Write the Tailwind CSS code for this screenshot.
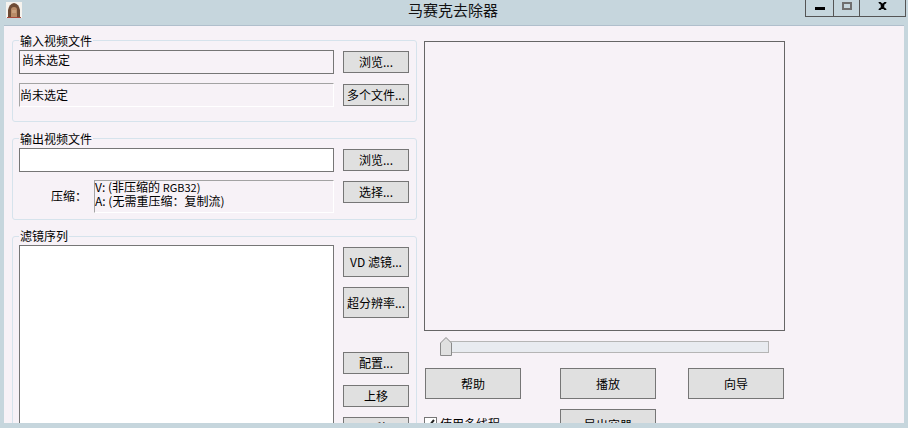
<!doctype html>
<html lang="zh">
<head>
<meta charset="utf-8">
<script src="https://cdn.jsdelivr.net/npm/@tailwindcss/browser@4"></script>
</head>
<body class="m-0 overflow-hidden">
<div class="relative w-[908px] h-[428px] bg-[#c6d6dd] text-[12px] leading-[14px] text-black font-['Noto_Sans_CJK_SC','Liberation_Sans',sans-serif] overflow-hidden">
  <!-- title bar -->
  <header class="relative h-[25px] flex justify-center pr-[2px]">
    <svg class="absolute left-[6px] top-[2px]" width="16" height="16" viewBox="0 0 16 16"><rect width="16" height="16" fill="#f6f3ee"/><path d="M2 15V8q1-6 6-7q5 1 6 7v7z" fill="#6e4c36"/><path d="M5 15V8q0-3 3-3t3 3v7z" fill="#b98c68"/><path d="M6 8h4v3H6z" fill="#c9a17f"/><path d="M1 15h14v1H1z" fill="#a8483a"/></svg>
    <h1 class="m-0 font-normal text-[15px] leading-[20px] text-[#111]">马赛克去除器</h1>
    <div class="absolute left-[805px] top-0 w-[101px] h-[17px] flex border border-t-0 border-[#555]">
      <div class="w-[28px] border-r border-[#555] flex justify-center"><span class="mt-[7px] w-[10px] h-[3px] bg-black"></span></div>
      <div class="w-[26px] border-r border-[#555] flex justify-center"><span class="mt-[2px] w-[10px] h-[8px] border-2 border-[#6f6f6f]"></span></div>
      <div class="flex-1 flex justify-center"><svg class="mt-[2px]" width="9" height="8" viewBox="0 0 9 8"><path d="M1 0l3.500 3L8 0M1 8l3.500-3L8 8M3 3l3 2M6 3L3 5" stroke="#000" stroke-width="2" fill="none"/></svg></div>
    </div>
  </header>
  <!-- client area -->
  <main class="ml-[4px] w-[900px] h-[398px] bg-[#f7f2f7] border-t border-[#b0bfcc] flex overflow-hidden">
    <div class="ml-[8px] w-[405px] shrink-0 pt-[14px] flex flex-col gap-[16px]">
      <section class="relative h-[82px] shrink-0 border border-[#d6e3ec] rounded-[3px] pl-[6px] pt-[9px] flex flex-col gap-[9px]">
        <span class="absolute left-[6px] top-[-7px] px-[1px] bg-[#f7f2f7]">输入视频文件</span>
        <div class="flex gap-[9px]">
          <div class="w-[315px] h-[24px] border border-[#767676] pl-[2px] leading-[17px]">尚未选定</div>
          <button class="mt-[1px] w-[66px] h-[22px] bg-[#e0e0e0] border border-[#767676]">浏览...</button>
        </div>
        <div class="flex gap-[9px]">
          <div class="w-[315px] h-[24px] border border-t-[#a3a3a3] border-l-[#a3a3a3] border-r-white border-b-white leading-[22px]">尚未选定</div>
          <button class="mt-[1px] w-[66px] h-[22px] bg-[#e0e0e0] border border-[#767676] whitespace-nowrap">多个文件...</button>
        </div>
      </section>
      <section class="relative h-[82px] shrink-0 border border-[#d6e3ec] rounded-[3px] pl-[6px] pt-[9px] flex flex-col gap-[8px]">
        <span class="absolute left-[6px] top-[-7px] px-[1px] bg-[#f7f2f7]">输出视频文件</span>
        <div class="flex gap-[9px]">
          <div class="w-[315px] h-[24px] border border-[#767676] bg-white"></div>
          <button class="mt-[1px] w-[66px] h-[22px] bg-[#e0e0e0] border border-[#767676]">浏览...</button>
        </div>
        <div class="flex gap-[9px]">
          <div class="w-[315px] h-[33px] flex">
            <span class="w-[75px] pl-[32px] pt-[9px]">压缩<span class="tracking-[-6px]">：</span></span>
            <div class="w-[240px] border border-t-[#a3a3a3] border-l-[#a3a3a3] border-r-white border-b-white whitespace-nowrap">
              <p class="m-0 -mt-px leading-[14px]">V: (非压缩的 <span class="text-[11px]">RGB32)</span></p>
              <p class="m-0 leading-[14px]">A: (无需重压缩：复制流)</p>
            </div>
          </div>
          <button class="mt-[1px] w-[66px] h-[22px] bg-[#e0e0e0] border border-[#767676]">选择...</button>
        </div>
      </section>
      <section class="relative h-[240px] shrink-0 border border-[#d6e3ec] rounded-[3px] pl-[6px] pt-[8px] flex gap-[9px]">
        <span class="absolute left-[6px] top-[-8px] px-[1px] bg-[#f7f2f7]">滤镜序列</span>
        <div class="w-[315px] h-[230px] border border-[#767676] bg-white"></div>
        <div class="w-[66px] pt-[2px] flex flex-col">
          <button class="h-[30px] bg-[#e0e0e0] border border-[#767676] whitespace-nowrap">VD 滤镜...</button>
          <button class="mt-[10px] h-[31px] bg-[#e0e0e0] border border-[#767676] whitespace-nowrap">超分辨率...</button>
          <button class="mt-[34px] h-[22px] bg-[#e0e0e0] border border-[#767676]">配置...</button>
          <button class="mt-[11px] h-[22px] bg-[#e0e0e0] border border-[#767676]">上移</button>
          <button class="mt-[10px] h-[22px] bg-[#e0e0e0] border border-[#767676]">下移</button>
        </div>
      </section>
    </div>
    <div class="ml-[7px] w-[362px] pt-[15px] flex flex-col">
      <div class="w-[361px] h-[290px] shrink-0 border border-[#666]"></div>
      <div class="relative mt-[10px] ml-[26px] w-[319px] h-[12px] shrink-0 bg-[#e8ebf0] border border-t-[#b5b5b5] border-l-[#dcdcdc] border-r-[#b5b5b5] border-b-[#b5b5b5]">
        <svg class="absolute left-[-11px] top-[-5px]" width="12" height="19" viewBox="0 0 12 19"><path d="M.5 18.500V6L6 .5 11.500 6v12.500z" fill="#e0e0e0" stroke="#8a8a8a"/></svg>
      </div>
      <div class="mt-[15px] pl-[1px] flex h-[31px] shrink-0">
        <button class="w-[96px] bg-[#e0e0e0] border border-[#767676]">帮助</button>
        <button class="ml-[39px] w-[96px] bg-[#e0e0e0] border border-[#767676]">播放</button>
        <button class="ml-[32px] w-[96px] bg-[#e0e0e0] border border-[#767676]">向导</button>
      </div>
      <div class="mt-[10px] flex">
        <label class="mt-[8px] w-[136px] flex gap-[3px] leading-[13px]">
          <span class="w-[13px] h-[13px] shrink-0 border border-[#767676] bg-white flex items-center justify-center"><svg width="9" height="9" viewBox="0 0 9 9"><path d="M1 5l2 2 5-6" stroke="#222" stroke-width="2" fill="none"/></svg></span>
          使用多线程
        </label>
        <button class="w-[96px] h-[31px] bg-[#e0e0e0] border border-[#767676]">导出容器</button>
      </div>
    </div>
  </main>
</div>
</body>
</html>
